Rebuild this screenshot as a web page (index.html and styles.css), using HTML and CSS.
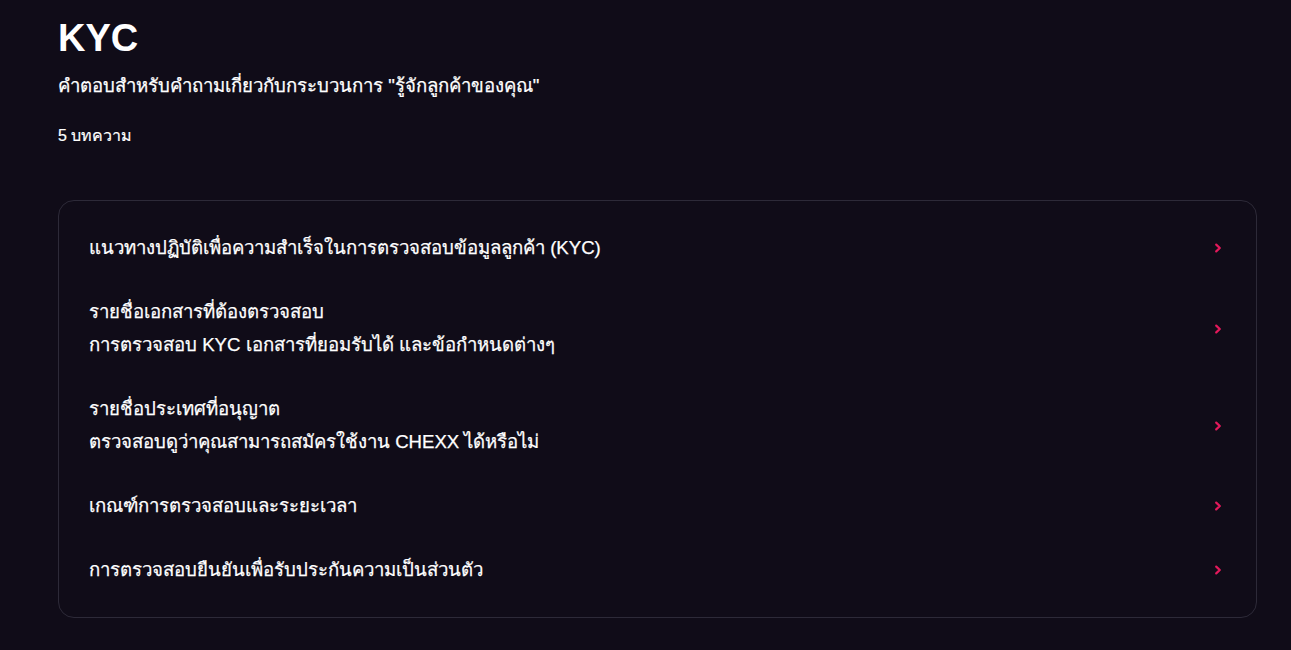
FILE: index.html
```html
<!DOCTYPE html>
<html lang="th">
<head>
<meta charset="utf-8">
<title>KYC</title>
<link rel="stylesheet" href="styles.css">
</head>
<body>
<main class="page">
  <header class="head">
    <h1 class="title">KYC</h1>
    <p class="subtitle">คำตอบสำหรับคำถามเกี่ยวกับกระบวนการ "รู้จักลูกค้าของคุณ"</p>
    <p class="count">5 บทความ</p>
  </header>
  <section class="card">
    <a class="row" href="#">
      <div class="text"><div class="row-title">แนวทางปฏิบัติเพื่อความสำเร็จในการตรวจสอบข้อมูลลูกค้า (KYC)</div></div>
      <svg class="chev" viewBox="0 0 10 10" width="10" height="10"><path d="M3.2 1.6 L6.8 5 L3.2 8.4" fill="none" stroke="#e3195b" stroke-width="2.2" stroke-linecap="round" stroke-linejoin="round"/></svg>
    </a>
    <a class="row" href="#">
      <div class="text"><div class="row-title">รายชื่อเอกสารที่ต้องตรวจสอบ</div><div class="row-desc">การตรวจสอบ KYC เอกสารที่ยอมรับได้ และข้อกำหนดต่างๆ</div></div>
      <svg class="chev" viewBox="0 0 10 10" width="10" height="10"><path d="M3.2 1.6 L6.8 5 L3.2 8.4" fill="none" stroke="#e3195b" stroke-width="2.2" stroke-linecap="round" stroke-linejoin="round"/></svg>
    </a>
    <a class="row" href="#">
      <div class="text"><div class="row-title">รายชื่อประเทศที่อนุญาต</div><div class="row-desc">ตรวจสอบดูว่าคุณสามารถสมัครใช้งาน CHEXX ได้หรือไม่</div></div>
      <svg class="chev" viewBox="0 0 10 10" width="10" height="10"><path d="M3.2 1.6 L6.8 5 L3.2 8.4" fill="none" stroke="#e3195b" stroke-width="2.2" stroke-linecap="round" stroke-linejoin="round"/></svg>
    </a>
    <a class="row" href="#">
      <div class="text"><div class="row-title">เกณฑ์การตรวจสอบและระยะเวลา</div></div>
      <svg class="chev" viewBox="0 0 10 10" width="10" height="10"><path d="M3.2 1.6 L6.8 5 L3.2 8.4" fill="none" stroke="#e3195b" stroke-width="2.2" stroke-linecap="round" stroke-linejoin="round"/></svg>
    </a>
    <a class="row" href="#">
      <div class="text"><div class="row-title">การตรวจสอบยืนยันเพื่อรับประกันความเป็นส่วนตัว</div></div>
      <svg class="chev" viewBox="0 0 10 10" width="10" height="10"><path d="M3.2 1.6 L6.8 5 L3.2 8.4" fill="none" stroke="#e3195b" stroke-width="2.2" stroke-linecap="round" stroke-linejoin="round"/></svg>
    </a>
  </section>
</main>
</body>
</html>
```

FILE: styles.css
```css
html, body {
  margin: 0;
  padding: 0;
  background: #100c18;
  color: #ffffff;
  font-family: "Liberation Sans", Arial, sans-serif;
}
.page {
  padding: 16px 34px 32px 58px;
}
.head {
  display: flex;
  flex-direction: column;
}
.title {
  margin: 0;
  font-size: 38px;
  line-height: 44px;
  font-weight: 700;
}
.subtitle {
  margin: 14px 0 0;
  font-size: 18.6px;
  line-height: 24px;
  -webkit-text-stroke: 0.25px #ffffff;
}
.count {
  margin: 28px 0 0;
  font-size: 16px;
  line-height: 20px;
  -webkit-text-stroke: 0.2px #ffffff;
}
.card {
  margin-top: 54px;
  border: 1px solid #2d2a38;
  border-radius: 16px;
  padding: 15px 33px 15px 30px;
  display: flex;
  flex-direction: column;
}
.row {
  display: flex;
  align-items: center;
  justify-content: space-between;
  padding: 17px 0;
  color: #ffffff;
  text-decoration: none;
}
.text {
  display: flex;
  flex-direction: column;
  gap: 3px;
}
.row-title, .row-desc {
  font-size: 18.6px;
  line-height: 30px;
  -webkit-text-stroke: 0.25px #ffffff;
}
.chev {
  flex: none;
}
```
